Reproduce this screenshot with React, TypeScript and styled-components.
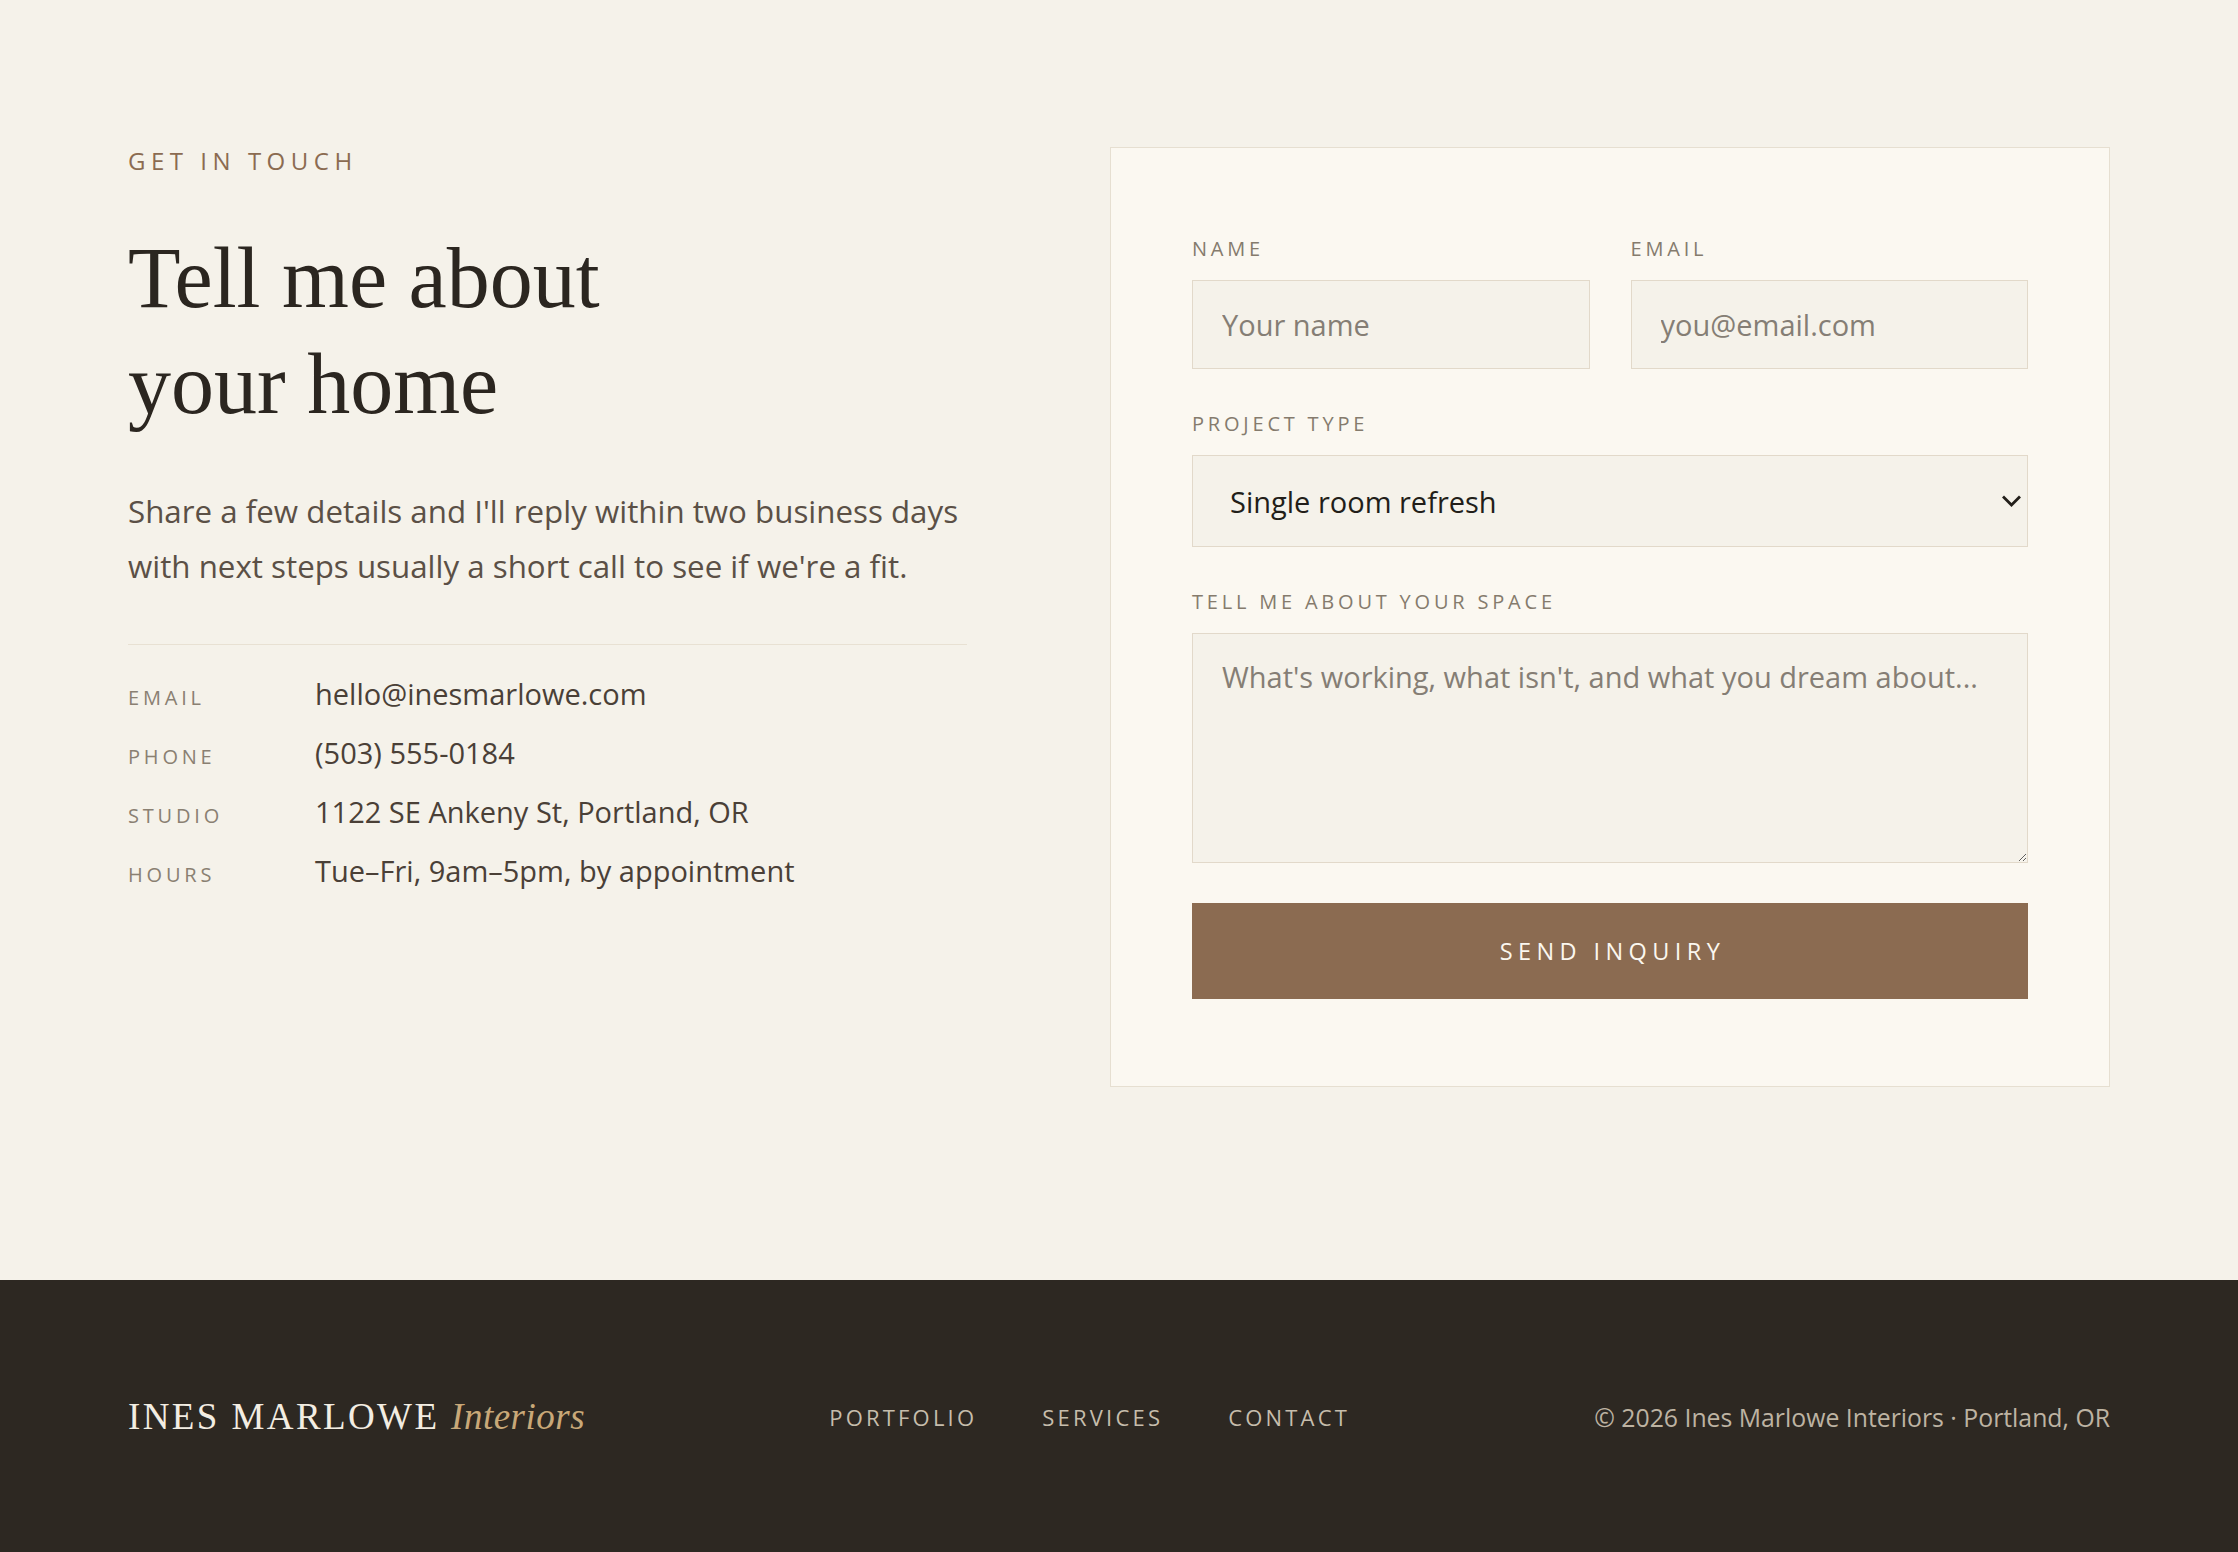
import React from "react";
import styled, { createGlobalStyle } from "styled-components";

const GlobalStyle = createGlobalStyle`
  *, *::before, *::after { box-sizing: border-box; }
  html, body { margin: 0; padding: 0; }
  body {
    background: #f5f2ea;
    font-family: "Open Sans", sans-serif;
    color: #2b2620;
    -webkit-font-smoothing: antialiased;
  }
`;

const Page = styled.div`
  display: flex;
  flex-direction: column;
  min-height: 100vh;
`;

/* ---------- contact section ---------- */

const ContactSection = styled.section`
  display: grid;
  grid-template-columns: 1fr 1000px;
  column-gap: 143px;
  align-items: start;
  padding: 147px 128px 193px;
`;

const Intro = styled.div`
  display: flex;
  flex-direction: column;
`;

const Eyebrow = styled.p`
  margin: 0;
  font-size: 24px;
  line-height: 28px;
  letter-spacing: 0.23em;
  text-transform: uppercase;
  color: #8b6b51;
`;

const Heading = styled.h1`
  margin: 50px 0 0;
  font-family: "Liberation Serif", serif;
  font-weight: 400;
  font-size: 86px;
  line-height: 106px;
  color: #2b2620;
`;

const Lead = styled.p`
  margin: 47px 0 0;
  font-size: 31.3px;
  line-height: 55px;
  color: #5b5046;
`;

const Details = styled.dl`
  margin: 50px 0 0;
  padding-top: 28px;
  border-top: 1px solid #e8e1d3;
  display: grid;
  grid-template-columns: 187px 1fr;
  row-gap: 17px;
  align-items: baseline;
`;

const DetailLabel = styled.dt`
  margin: 0;
  font-size: 20px;
  letter-spacing: 0.19em;
  text-transform: uppercase;
  color: #8a8072;
`;

const DetailValue = styled.dd`
  margin: 0;
  font-size: 29px;
  line-height: 42px;
  color: #4a4037;
`;

/* ---------- inquiry form ---------- */

const FormCard = styled.form`
  display: flex;
  flex-direction: column;
  gap: 40px;
  padding: 86px 81px 87px;
  background: #fbf8f1;
  border: 1px solid #e6dfd1;
`;

const FieldRow = styled.div`
  display: grid;
  grid-template-columns: 1fr 1fr;
  column-gap: 41px;
`;

const Field = styled.label`
  display: flex;
  flex-direction: column;
  gap: 16px;
`;

const FieldLabel = styled.span`
  font-size: 20px;
  line-height: 30px;
  letter-spacing: 0.19em;
  text-transform: uppercase;
  color: #857b6d;
`;

const controlBase = `
  width: 100%;
  margin: 0;
  border: 1px solid #e2d9ca;
  border-radius: 0;
  background: #f5f2ea;
  font-family: "Open Sans", sans-serif;
  font-size: 29px;
  color: #2b2620;
  outline: none;
  &::placeholder { color: #857e75; opacity: 1; }
`;

const TextInput = styled.input`
  ${controlBase}
  height: 89px;
  padding: 0 29px;
`;

const SelectWrap = styled.div`
  position: relative;
`;

const Select = styled.select`
  ${controlBase}
  display: block;
  height: 92px;
  padding: 0 60px 0 37px;
  appearance: none;
  -webkit-appearance: none;
  color: #221e19;
  cursor: pointer;
`;

const Chevron = styled.svg`
  position: absolute;
  top: 50%;
  right: 7px;
  width: 19px;
  height: 12px;
  transform: translateY(-50%);
  pointer-events: none;
`;

const TextArea = styled.textarea<{ $rows: number }>`
  ${controlBase}
  display: block;
  height: ${(p) => p.$rows * 43.5 + 56}px;
  padding: 21px 29px;
  line-height: 1.5;
  resize: vertical;
`;

const SubmitButton = styled.button`
  height: 96px;
  padding: 0 0 0 5px;
  border: none;
  border-radius: 0;
  background: #8b6b51;
  color: #fbf7ef;
  font-family: "Open Sans", sans-serif;
  font-size: 23.5px;
  letter-spacing: 5.4px;
  text-transform: uppercase;
  cursor: pointer;
`;

/* ---------- footer ---------- */

const Footer = styled.footer`
  flex: 1;
  display: flex;
  align-items: center;
  justify-content: space-between;
  padding: 115px 128px 113px;
  background: #2d2822;
`;

const Brand = styled.div`
  font-family: "Liberation Serif", serif;
  font-size: 37px;
  line-height: 44px;
  letter-spacing: 2.4px;
  color: #f3ede2;
`;

const BrandAccent = styled.em`
  font-style: italic;
  letter-spacing: 0.5px;
  color: #c9a878;
`;

const FooterNav = styled.nav`
  display: flex;
  gap: 65px;
`;

const FooterLink = styled.a`
  font-size: 22px;
  letter-spacing: 3.2px;
  text-transform: uppercase;
  text-decoration: none;
  color: #c6bdac;
`;

const Copyright = styled.p`
  margin: 0;
  font-size: 24.8px;
  color: #bdb3a2;
`;

const details = [
  { label: "Email", value: "hello@inesmarlowe.com" },
  { label: "Phone", value: "(503) 555-0184" },
  { label: "Studio", value: "1122 SE Ankeny St, Portland, OR" },
  { label: "Hours", value: "Tue–Fri, 9am–5pm, by appointment" },
];

const projectTypes = [
  "Single room refresh",
  "Full home design",
  "Renovation consulting",
  "Styling & furnishing",
];

export default function App() {
  return (
    <Page>
      <GlobalStyle />
      <ContactSection>
        <Intro>
          <Eyebrow>Get in touch</Eyebrow>
          <Heading>
            Tell me about
            <br />
            your home
          </Heading>
          <Lead>
            Share a few details and I'll reply within two business days with
            next steps usually a short call to see if we're a fit.
          </Lead>
          <Details>
            {details.map((d) => (
              <React.Fragment key={d.label}>
                <DetailLabel>{d.label}</DetailLabel>
                <DetailValue>{d.value}</DetailValue>
              </React.Fragment>
            ))}
          </Details>
        </Intro>

        <FormCard onSubmit={(e) => e.preventDefault()}>
          <FieldRow>
            <Field>
              <FieldLabel>Name</FieldLabel>
              <TextInput type="text" placeholder="Your name" />
            </Field>
            <Field>
              <FieldLabel>Email</FieldLabel>
              <TextInput type="email" placeholder="you@email.com" />
            </Field>
          </FieldRow>
          <Field>
            <FieldLabel>Project type</FieldLabel>
            <SelectWrap>
              <Select defaultValue={projectTypes[0]}>
                {projectTypes.map((t) => (
                  <option key={t} value={t}>
                    {t}
                  </option>
                ))}
              </Select>
              <Chevron viewBox="0 0 19 12" fill="none" aria-hidden="true">
                <path
                  d="M2 2.5l7.5 7.5L17 2.5"
                  stroke="#231f1a"
                  strokeWidth="2.8"
                  strokeLinecap="square"
                />
              </Chevron>
            </SelectWrap>
          </Field>
          <Field>
            <FieldLabel>Tell me about your space</FieldLabel>
            <TextArea
              $rows={4}
              placeholder="What's working, what isn't, and what you dream about..."
            />
          </Field>
          <SubmitButton type="submit">Send inquiry</SubmitButton>
        </FormCard>
      </ContactSection>

      <Footer>
        <Brand>
          INES MARLOWE <BrandAccent>Interiors</BrandAccent>
        </Brand>
        <FooterNav>
          <FooterLink href="#portfolio">Portfolio</FooterLink>
          <FooterLink href="#services">Services</FooterLink>
          <FooterLink href="#contact">Contact</FooterLink>
        </FooterNav>
        <Copyright>© 2026 Ines Marlowe Interiors · Portland, OR</Copyright>
      </Footer>
    </Page>
  );
}
